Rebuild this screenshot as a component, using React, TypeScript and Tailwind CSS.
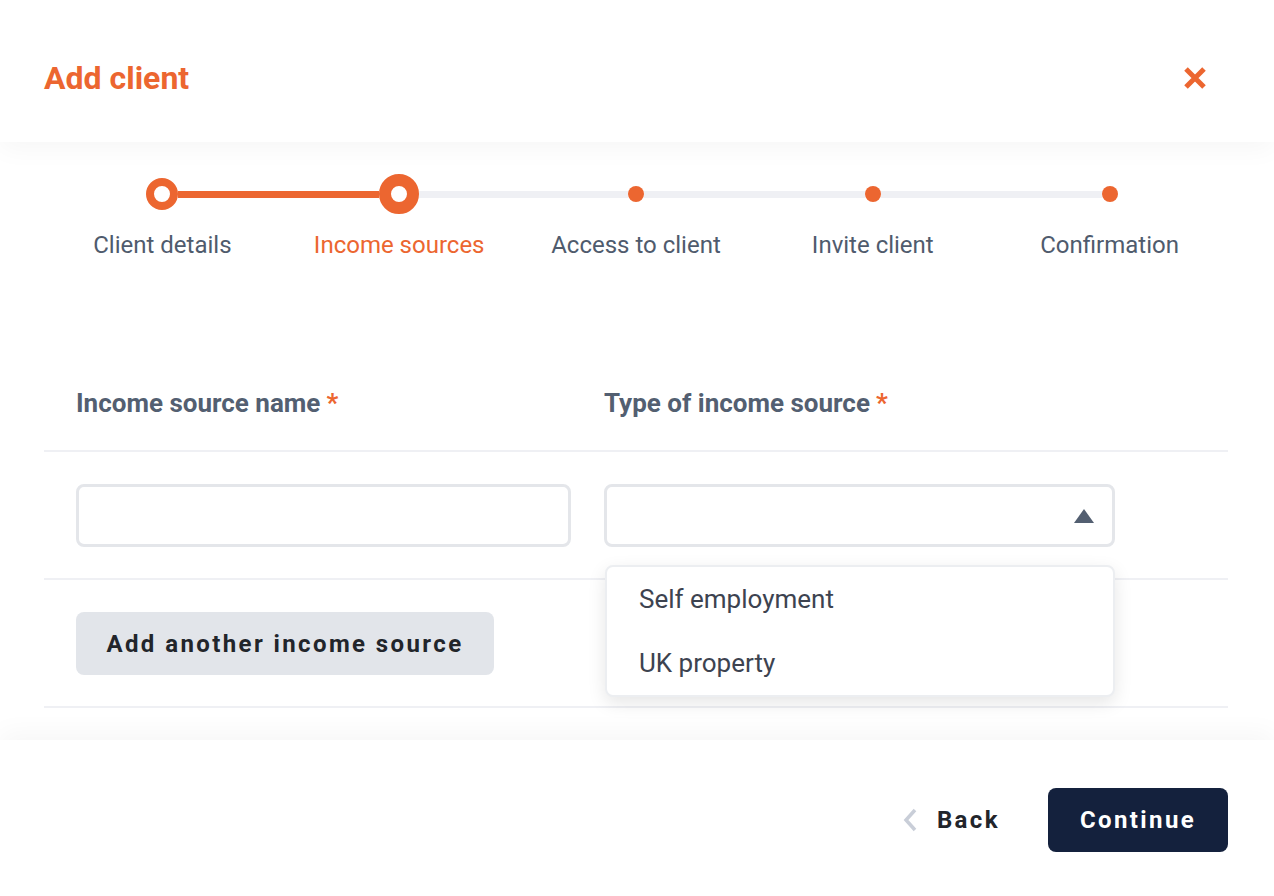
import React from "react";

type Step = {
  label: string;
  state: "done" | "current" | "todo";
};

const steps: Array<Step> = [
  { label: "Client details", state: "done" },
  { label: "Income sources", state: "current" },
  { label: "Access to client", state: "todo" },
  { label: "Invite client", state: "todo" },
  { label: "Confirmation", state: "todo" },
];

const options = ["Self employment", "UK property"];

const StepDot: React.FC<{ state: Step["state"] }> = ({ state }) => {
  if (state === "done")
    return (
      <div className="h-8 w-8 shrink-0 rounded-full border-8 border-[#ec6630] bg-white" />
    );
  if (state === "current")
    return (
      <div className="h-10 w-10 shrink-0 rounded-full border-[12px] border-[#ec6630] bg-white" />
    );
  return <div className="h-4 w-4 shrink-0 rounded-full bg-[#ec6630]" />;
};

const Stepper: React.FC = () => (
  <div className="grid grid-cols-5 pt-8">
    {steps.map((step, i) => {
      const leftDone = i > 0 && steps[i].state !== "todo";
      const rightDone = step.state === "done";
      return (
        <div key={step.label} className="flex flex-col items-center">
          <div className="flex h-10 w-full items-center">
            <div
              className={
                i === 0
                  ? "h-[7px] flex-1"
                  : leftDone
                  ? "h-[7px] flex-1 bg-[#ec6630]"
                  : "h-[7px] flex-1 bg-[#eff0f4]"
              }
            />
            <StepDot state={step.state} />
            <div
              className={
                i === steps.length - 1
                  ? "h-[7px] flex-1"
                  : rightDone
                  ? "h-[7px] flex-1 bg-[#ec6630]"
                  : "h-[7px] flex-1 bg-[#eff0f4]"
              }
            />
          </div>
          <div
            className={
              step.state === "current"
                ? "mt-[17px] text-[24px] leading-7 text-[#ec6630]"
                : "mt-[17px] text-[24px] leading-7 text-[#4f5b6d]"
            }
          >
            {step.label}
          </div>
        </div>
      );
    })}
  </div>
);

const Required: React.FC = () => <span className="ml-1.5 text-[#ec6630]">*</span>;

const App: React.FC = () => {
  return (
    <div
      className="flex min-h-[896px] flex-col bg-white"
      style={{ fontFamily: "Roboto, 'Liberation Sans', sans-serif" }}
    >
      <header className="relative z-10 flex h-[142px] items-center justify-between bg-white pt-[14px] pl-11 pr-[67px] shadow-[0_8px_24px_rgba(0,0,0,0.035)]">
        <h1 className="text-[32px] font-bold leading-none text-[#ec6630]">Add client</h1>
        <button className="text-[#ec6630]" aria-label="Close">
          <svg width="24" height="24" viewBox="0 0 24 24" fill="none">
            <path d="M3 3L21 21M21 3L3 21" stroke="currentColor" strokeWidth="5" />
          </svg>
        </button>
      </header>

      <main className="flex-1 pl-11 pr-[46px] pb-8">
        <Stepper />

        <div className="mt-[97px]">
          <div className="flex h-24 items-center border-b-2 border-[#eff0f4] text-[26px] font-bold text-[#535f71]">
            <div className="w-[528px] pl-8">
              Income source name
              <Required />
            </div>
            <div className="pl-8">
              Type of income source
              <Required />
            </div>
          </div>

          <div className="flex border-b-2 border-[#eff0f4] pt-8 pb-[31px]">
            <div className="w-[528px] pl-8">
              <input className="h-[63px] w-[495px] rounded-lg border-[3px] border-[#e4e6ea] bg-white px-4 text-[22px] outline-none" />
            </div>
            <div className="relative pl-8">
              <div className="flex h-[63px] w-[511px] items-center justify-end rounded-lg border-[3px] border-[#e4e6ea] bg-white pr-[18px]">
                <svg width="20" height="14" viewBox="0 0 20 14">
                  <path d="M10 0L20 14H0Z" fill="#535f71" />
                </svg>
              </div>
              <ul className="absolute left-[33px] top-[81px] z-20 w-[510px] rounded-lg border-2 border-[#eceef1] bg-white shadow-[0_6px_18px_rgba(0,0,0,0.1)]">
                {options.map((opt) => (
                  <li
                    key={opt}
                    className="flex h-16 items-center pl-8 text-[26px] text-[#3d4350]"
                  >
                    {opt}
                  </li>
                ))}
              </ul>
            </div>
          </div>

          <div className="border-b-2 border-[#eff0f4] pt-8 pb-[31px] pl-8">
            <button className="h-[63px] w-[418px] rounded-lg bg-[#e2e5ea] text-[24px] font-bold tracking-[0.1em] text-[#22252b]">
              Add another income source
            </button>
          </div>
        </div>
      </main>

      <footer className="relative z-10 flex h-[156px] items-start justify-end bg-white pl-11 pr-[46px] pt-12 shadow-[0_-8px_24px_rgba(0,0,0,0.035)]">
        <div className="flex h-16 items-center">
          <button className="flex items-center gap-5 text-[24px] font-bold tracking-[0.1em] text-[#22252b]">
            <svg width="14" height="24" viewBox="0 0 14 24" fill="none">
              <path d="M12 2L3 12L12 22" stroke="#c9ced8" strokeWidth="3.5" />
            </svg>
            Back
          </button>
          <button className="ml-[48px] h-16 w-[180px] rounded-lg bg-[#14213d] text-[24px] font-bold tracking-[0.1em] text-white">
            Continue
          </button>
        </div>
      </footer>
    </div>
  );
};

export default App;
